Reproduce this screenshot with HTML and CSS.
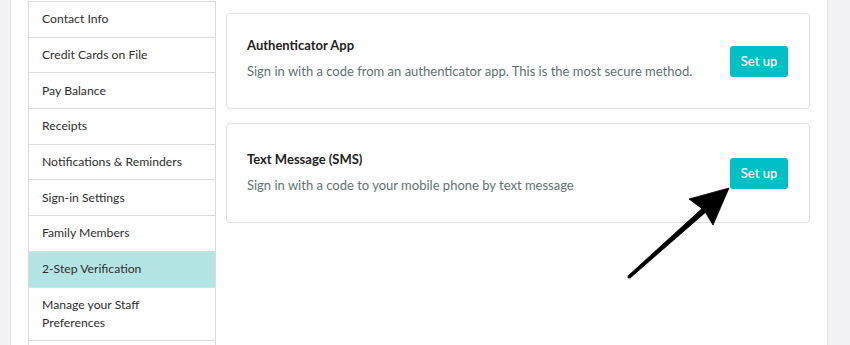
FILE: index.html
```html
<!DOCTYPE html>
<html>
<head>
<meta charset="utf-8">
<link rel="stylesheet" href="styles.css">
</head>
<body>
<div class="page">
  <div class="gutter gutter-left"></div>
  <main class="main">
    <nav class="nav">
      <div class="nav-item">Contact Info</div>
      <div class="nav-item">Credit Cards on File</div>
      <div class="nav-item">Pay Balance</div>
      <div class="nav-item">Receipts</div>
      <div class="nav-item">Notifications &amp; Reminders</div>
      <div class="nav-item">Sign-in Settings</div>
      <div class="nav-item">Family Members</div>
      <div class="nav-item active">2-Step Verification</div>
      <div class="nav-item">Manage your Staff Preferences</div>
      <div class="nav-item"></div>
    </nav>
    <section class="content">
      <div class="card">
        <div class="card-text">
          <div class="card-title">Authenticator App</div>
          <div class="card-desc">Sign in with a code from an authenticator app. This is the most secure method.</div>
        </div>
        <button class="btn">Set up</button>
      </div>
      <div class="card card-sms">
        <div class="card-text">
          <div class="card-title">Text Message (SMS)</div>
          <div class="card-desc">Sign in with a code to your mobile phone by text message</div>
        </div>
        <button class="btn">Set up</button>
      </div>
    </section>
  </main>
  <div class="gutter gutter-right"></div>
  <svg class="arrow" width="850" height="345" viewBox="0 0 850 345">
    <polygon points="628,275.9 702,208.6 689,199 729,188 713,225 705.4,212.4 630,278.1" fill="#000" stroke="#000" stroke-width="0.8" stroke-linejoin="round"/>
    <circle cx="629" cy="277" r="1.6" fill="#000"/>
  </svg>
</div>
</body>
</html>
```
FILE: styles.css
```css
* { box-sizing: border-box; }
html, body { margin: 0; padding: 0; }
body {
  font-family: "Lato", "Liberation Sans", sans-serif;
  font-size: 13px;
  color: #333;
  background: #fff;
}
.page {
  position: relative;
  display: flex;
  width: 850px;
  height: 345px;
  overflow: hidden;
}
.gutter {
  background: #f2f2f4;
  flex: none;
}
.gutter-left {
  width: 11px;
  border-right: 1px solid #e8e8ea;
}
.gutter-right {
  width: 23px;
  border-left: 1px solid #e8e8ea;
}
.main {
  flex: 1;
  display: flex;
  align-items: flex-start;
  gap: 10px;
  padding: 1px 17px 0 17px;
}
.nav {
  width: 188px;
  flex: none;
  border: 1px solid #dcdcdc;
  border-bottom: none;
}
.nav-item {
  min-height: 35.7px;
  padding: 8.35px 13px;
  font-size: 12.2px;
  line-height: 18px;
  border-bottom: 1px solid #dcdcdc;
  color: #2e2e2e;
}
.nav-item.active { background: #b3e5e4; }
.content {
  flex: 1;
  display: flex;
  flex-direction: column;
  gap: 14px;
  padding-top: 12px;
}
.card {
  display: flex;
  align-items: center;
  border: 1px solid #e0e0e0;
  border-radius: 4px;
  padding: 0 21px 0 20px;
  height: 96px;
}
.card-sms { height: 100px; }
.card-text { flex: 1; margin-bottom: 7px; }
.card-sms .card-text { margin-bottom: 3px; }
.card-title {
  font-weight: 700;
  color: #1e1e1e;
  line-height: 18px;
}
.card-desc {
  margin-top: 8px;
  color: #5d7373;
  line-height: 18px;
}
.btn {
  flex: none;
  width: 58px;
  height: 31px;
  border: none;
  border-radius: 3px;
  background: #00bfc6;
  color: #fff;
  font-family: inherit;
  font-size: 13px;
  font-weight: 600;
  padding: 0;
}
.arrow {
  position: absolute;
  left: 0;
  top: 0;
  pointer-events: none;
}
```
